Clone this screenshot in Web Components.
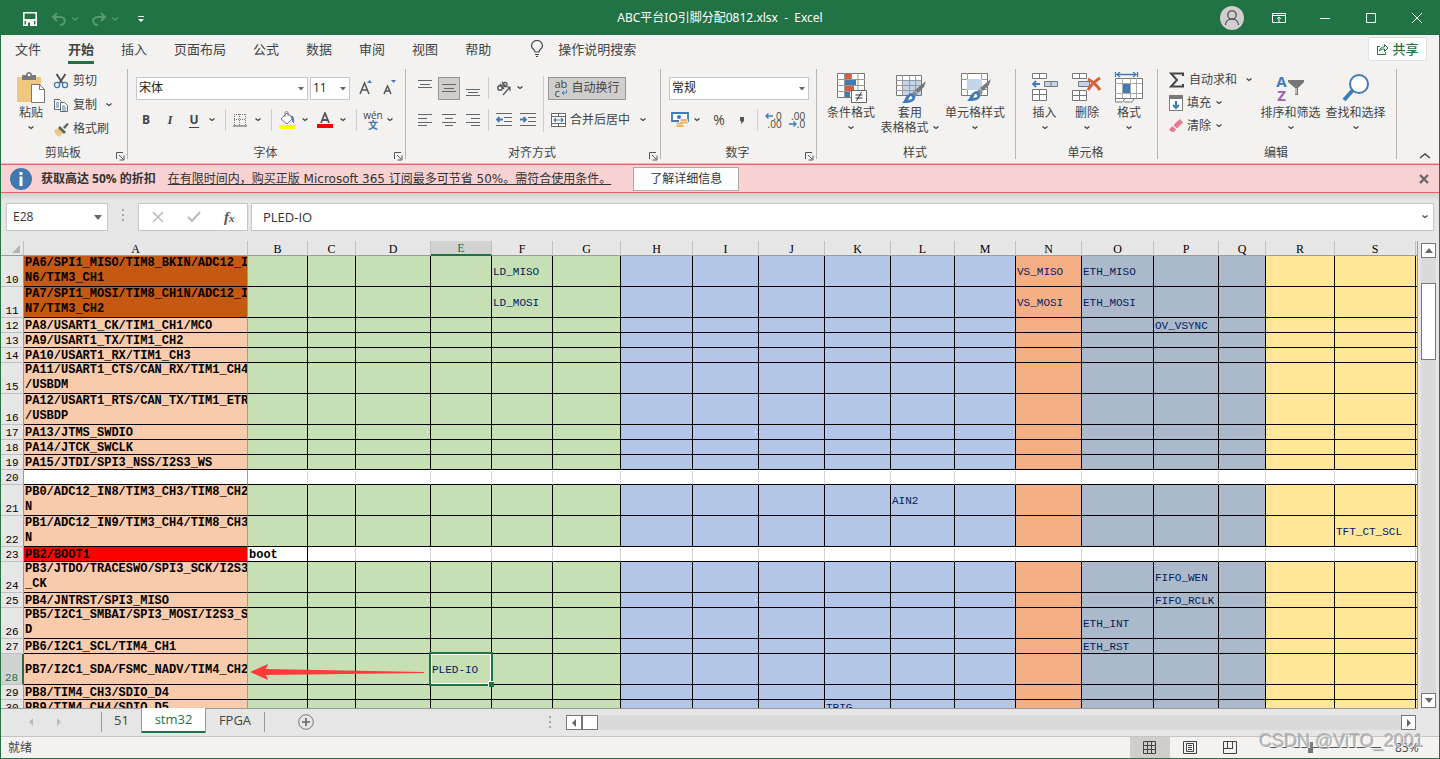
<!DOCTYPE html>
<html lang="zh-CN">
<head>
<meta charset="utf-8">
<title>ABC平台IO引脚分配0812.xlsx - Excel</title>
<style>
html,body{margin:0;height:100%}
body{font:12px/16px "Open Sans","Noto Sans CJK SC",sans-serif;color:#444;background:#217346}
</style>
</head>
<body>
<excel-window></excel-window>
<script>
const BASE = `*{box-sizing:border-box}
button{font:inherit;color:inherit;background:none;border:0;padding:0;margin:0;display:flex;align-items:center;justify-content:center;white-space:nowrap}
svg{display:block}`;

function define(name, css, html, after) {
  const t = document.createElement('template');
  t.innerHTML = `<style>${BASE}${css}</style>${html}`;
  customElements.define(name, class extends HTMLElement {
    connectedCallback() {
      if (this.shadowRoot) return;
      this.attachShadow({mode: 'open'}).appendChild(t.content.cloneNode(true));
      if (after) after(this, this.shadowRoot);
    }
  });
}

const G = '#666', B = '#3f7bb9';
const brush = `<path d="M32 5 30 11 24 17 21 14z" fill="#777"/><path d="m20 15 4 3-4 4-3-4z" fill="#8a8a8a"/><path d="M17 17c3 1 5 3 4 6-2 4-7 4-13 4 3-2 3-8 9-10z" fill="${B}"/><path d="M16 20c2 0 3 2 2 3l-4 1z" fill="#fff"/>`;
const lines = (ys, xs) => ys.map((y, i) => `<path d="M${xs[i % xs.length][0]} ${y}.5h${xs[i % xs.length][1]}"/>`).join('');
const stroke = (s, c = G) => `<g fill="none" stroke="${c}">${s}</g>`;
const ICONS = {
  save: [16, 16, `<path d="M1.800 1.800h12.400v12.400H1.800z" fill="none" stroke="#fff" stroke-width="1.600"/><path d="M2 8h12v2H2zM4 10h8v5H4z" fill="#fff"/><path d="M6 11.500h2V15H6z" fill="#217346"/>`],
  undo: [16, 16, `<path d="M6 2 2 6l4 4M2 6h7c7 0 6 8 0 8" fill="none" stroke="#559a74" stroke-width="2"/>`],
  redo: [16, 16, `<path d="m10 2 4 4-4 4M14 6H7c-7 0-6 8 0 8" fill="none" stroke="#559a74" stroke-width="2"/>`],
  qat: [8, 8, `<path d="M1 1h6v1H1zM1 4h6L4 7z" fill="#fff"/>`],
  user: [24, 24, `<circle cx="12" cy="12" r="12" fill="#d0cece"/><circle cx="12" cy="9" r="4.200" fill="none" stroke="#555" stroke-width="1.300"/><path d="M5.500 19c0-8 13-8 13 0" fill="none" stroke="#555" stroke-width="1.300"/>`],
  ribbonopt: [14, 12, `<path d="M.5 1.500h13v9H.5zM1 3.500h12M7 10V5M5 7l2-2 2 2" fill="none" stroke="#fff"/>`],
  min: [10, 10, `<path d="M0 5.500h10" stroke="#fff"/>`],
  max: [10, 10, `<path d="M.5.5h9v9h-9z" stroke="#fff" fill="none"/>`],
  close: [12, 12, `<path d="m1 1 10 10M11 1 1 11" stroke="#fff"/>`],
  bulb: [14, 18, `<path d="M5 12c0-3-3.500-3-3.500-6a5.500 5.500 0 0 1 11 0C12.500 9 9 9 9 12zM5 14.500h4M6 16.500h2" fill="none" stroke="#444" stroke-width="1.200"/>`],
  share: [13, 13, `<path d="M4 3.500H1.500v8h8V9" fill="none" stroke="#217346"/><path d="M3.500 8c.5-3 2-4 5-4V1.500L12 5 8.500 8.500V6c-2 0-4 0-5 2z" fill="none" stroke="#217346"/>`],
  chev: [8, 6, `<path d="m1.500 1.500 2.500 2 2.500-2" fill="none" stroke="#444" stroke-width="1.300"/>`],
  chevlite: [8, 6, `<path d="m1 1.500 3 2.500 3-2.500" fill="none" stroke="#559a74" stroke-width="1.300"/>`],
  tri: [6, 4, `<path d="M0 0h6L3 3.500z" fill="#666"/>`],
  tri8: [8, 5, `<path d="M0 0h8L4 5z" fill="#666"/>`],
  launch: [9, 9, `<path d="M.5 7V.5H7M3 3l4 4M8 3.500V8H3.500" fill="none" stroke="#555"/>`],
  up: [12, 8, `<path d="m1 6 5-4 5 4" fill="none" stroke="#444" stroke-width="1.400"/>`],
  paste: [30, 32, `<path d="M1 5h24v25H1z" fill="#edc87e"/><path d="M6 3h4c0-4 6-4 6 0h4v5H6z" fill="#7a7a7a"/><circle cx="13" cy="3" r="1.300" fill="#fff"/><path d="M15.500 12.500h8l5 5v13h-13z" fill="#fff" stroke="#777"/><path d="M23.500 12.500v5h5" fill="none" stroke="#777"/>`],
  cut: [16, 16, `<path d="m3.500 1 6 9M12.500 1l-6 9" stroke="#555" stroke-width="2" fill="none"/><circle cx="4" cy="12" r="2.600" fill="none" stroke="${B}" stroke-width="1.300"/><circle cx="12" cy="12" r="2.600" fill="none" stroke="${B}" stroke-width="1.300"/>`],
  copy: [16, 16, `<path d="M1.500 2.500h5l2 2v8h-7z" fill="#fff" stroke="#666"/><path d="M7.500 5.500h4l3 3v6h-7z" fill="#fff" stroke="#666"/><path d="M3 6h3M3 8h3M3 10h3M9 9h3M9 11h4M9 13h4" stroke="${B}"/>`],
  brush: [16, 16, `<path d="m1 9 6-2 4 4-5 5C3 14 2 12 1 9z" fill="#edc87e"/><path d="m7 5 6 6-2 2-6-6z" fill="#666"/><path d="m10 6 4-4 2 1-4 5z" fill="#666"/>`],
  sigma: [16, 16, `<path d="M14 4V1.500H2L8 8l-6 6.500h12V12" fill="none" stroke="#444" stroke-width="2"/>`],
  fill: [14, 16, `<path d="M.5 2.500h13v13H.5z" fill="#fff" stroke="#777"/><path d="M0 0h14v4H0z" fill="#777"/><path d="M7 6v7M4 10l3 3 3-3" fill="none" stroke="${B}" stroke-width="2"/>`],
  eraser: [14, 16, `<path d="M8 3.500 11 1l3 3.500-6 6L4.500 7z" fill="#e8788f"/><path d="m3.500 8 3.500 3.500L5 14l-3-.5-2-2z" fill="#e8788f"/>`],
  borders: [14, 14, `<path d="M1 1.500h12M1 6.500h12M1.500 1v12M6.500 1v12M12.500 1v12" stroke="#777" stroke-dasharray="1 1"/><path d="M0 13h14" stroke="#555"/>`],
  bucket: [18, 18, `<path d="m3 8 6-6 6 5-6 6z" fill="#fff" stroke="#777"/><path d="M7 6V2c0-2 3-2 3 0v3" fill="none" stroke="#777"/><path d="M12 5c4-1 4 2 4 7-3-1-1-4-4-7z" fill="${B}"/><path d="M1 14h16v4H1z" fill="#ff0"/>`],
  fontcolor: [16, 16, `<path d="m4 11 4-10 4 10M5.500 8h5" fill="none" stroke="#555" stroke-width="1.800"/><path d="M0 12h16v4H0z" fill="#f00"/>`],
  grow: [14, 18, `<path d="m1 15 4.500-11L10 15M3 11h5" fill="none" stroke="#555" stroke-width="1.500"/><path d="M8 4h5l-2.500-3z" fill="${B}"/>`],
  shrink: [14, 18, `<path d="m1 15 3.500-8L8 15M2.500 12h4" fill="none" stroke="#555" stroke-width="1.500"/><path d="M8 1h5l-2.500 3z" fill="${B}"/>`],
  vtop: [14, 16, stroke(lines([0, 4, 7], [[0, 14], [2, 10], [0, 14]]))],
  vmid: [14, 16, stroke(lines([4, 8, 11], [[0, 14], [2, 10], [0, 14]]))],
  vbot: [14, 16, stroke(lines([9, 12, 15], [[0, 14], [2, 10], [0, 14]]))],
  left: [14, 12, stroke(lines([0, 4, 8, 11], [[0, 14], [0, 9]]))],
  center: [14, 12, stroke(lines([0, 4, 8, 11], [[0, 14], [3, 8]]))],
  right: [14, 12, stroke(lines([0, 4, 8, 11], [[0, 14], [5, 9]]))],
  outdent: [16, 14, stroke(`<path d="M0 .5h16M8 4.500h8M8 8.500h8M0 12.500h16"/>`) + `<path d="M7 6.500H1M3.500 4 1 6.500 3.500 9" fill="none" stroke="${B}" stroke-width="1.800"/>`],
  indent: [16, 14, stroke(`<path d="M0 .5h16M8 4.500h8M8 8.500h8M0 12.500h16"/>`) + `<path d="M0 6.500h6M3.500 4 6 6.500 3.500 9" fill="none" stroke="${B}" stroke-width="1.800"/>`],
  wrap: [12, 16, `<path d="M10.500 10v3H6M8 11l-2 2 2 2" fill="none" stroke="${B}"/>`],
  orient: [16, 16, `<circle cx="4" cy="8" r="2.200" fill="none" stroke="#555" stroke-width="1.400"/><path d="m4 4 4 5M6 2l4 5" stroke="#555" stroke-width="1.400"/><circle cx="9" cy="4.500" r="2" fill="none" stroke="#555" stroke-width="1.300"/><path d="M7 15 14 7M10.500 7H14v4" fill="none" stroke="#555" stroke-width="1.200"/>`],
  merge: [16, 16, `<path d="M.5 1.500h14v13H.5z" fill="#fff" stroke="#666"/><path d="M0 4.500h15M0 11.500h15M7.500 1v3M7.500 12v3" stroke="#666"/><path d="M3 8h9M5 6 3 8l2 2M10 6l2 2-2 2" fill="none" stroke="${B}" stroke-width="1.200"/>`],
  money: [18, 18, `<path d="M1 2h16v8H1z" fill="#fff" stroke="${B}" stroke-width="1.800"/><circle cx="8" cy="6" r="2" fill="${B}"/><path d="M8 8h9v9H5v-5h3z" fill="#f3f2f1"/><path d="M9.500 9h7M9.500 11.500h7M5.500 12.500h6M5.500 15h7" stroke="#e8b869" stroke-width="1.800"/>`],
  comma: [6, 8, `<path d="M1 1h4v4L2 8V5H1z" fill="#555"/>`],
  decl: [8, 8, `<path d="M8 4H1M3.500 1.500 1 4l2.500 2.500" fill="none" stroke="${B}" stroke-width="1.400"/>`],
  decr: [8, 8, `<path d="M0 4h7M4.500 1.500 7 4 4.500 6.500" fill="none" stroke="${B}" stroke-width="1.400"/>`],
  cond: [32, 32, `<path d="M2.500 1.500h27v24h-27z" fill="#fff" stroke="#777"/><path d="M9.500 1v24M16.500 1v24M23 1v24M2 7.500h28M2 13.500h28M2 19.500h28" stroke="#999"/><path d="M10 2h6v5h-6zM10 14h9v5h-9z" fill="#db5b3b"/><path d="M10 8h11v5H10zM10 20h5v5h-5z" fill="${B}"/><path d="M16.500 18.500h15v12h-15z" fill="#fff" stroke="#666"/><path d="M20.500 23h7M20.500 26h7M26.500 20l-5 9" stroke="#333"/>`],
  table: [34, 32, `<path d="M3.500 3.500h25v20h-25z" fill="#fff" stroke="#777"/><path d="M10 8h18v15H10z" fill="#c2d5ea"/><path d="M9.500 3v20M16.500 3v20M22.500 3v20M3 8.500h25M3 13.500h25M3 18.500h25" stroke="#999"/><g transform="translate(1 4)">${brush}</g>`],
  cellstyle: [34, 32, `<path d="M3.500 1.500h26v22h-26z" fill="#fff" stroke="#777"/><path d="M9.500 1v22M23.500 1v22M3 7.500h26M3 17.500h26" stroke="#999"/><path d="M9 7h15v11H9z" fill="#c2d5ea"/><g transform="translate(1 2)">${brush}</g>`],
  insert: [28, 32, `<path d="M1.500 1.500h14v5h-14zM8.500 1v6M1.500 17.500h14v11h-14zM8.500 17v11M1 22.500h14" fill="#fff" stroke="#777"/><path d="M13.500 9.500h13v5h-13zM20 9v6" fill="#c2d5ea" stroke="#777"/><path d="M9 12H2M5 9l-3 3 3 3" fill="none" stroke="${B}" stroke-width="1.800"/>`],
  del: [30, 32, `<path d="M.5 1.500h14v5H.5zM7.500 1v6M.5 18.500h14v10H.5zM7.500 18v10M0 23.500h14" fill="#fff" stroke="#777"/><path d="M6.500 9.500h11v5h-11z" fill="#c2d5ea" stroke="#777"/><path d="M16 7c5 3 9 6 12 11M28 6c-5 3-9 7-12 12" fill="none" stroke="#db5b3b" stroke-width="2.800"/>`],
  format: [30, 32, `<path d="M1.500 0v5M23.500 0v5M3 2.500h19M6 0 3 2.500 6 5M19 0l3 2.500L19 5" fill="none" stroke="${B}" stroke-width="1.300"/><path d="M1.500 6.500h27v20h-27z" fill="#fff" stroke="#777"/><path d="M8.500 6v20M16.500 6v20M22.500 6v20M1 11.500h27M1 21.500h27" stroke="#aaa"/><path d="M9 12h7v9H9z" fill="${B}"/><path d="M1.500 27v3h7l2-3M10 30h8l2-3" fill="#fff" stroke="#777"/>`],
  funnel: [18, 18, `<path d="M1 1h16v2l-6 6v7H8V9L1 3z" fill="#777"/><path d="M9 9v6" stroke="#fff"/>`],
  find: [30, 32, `<circle cx="18" cy="12" r="9" fill="#fff" stroke="${B}" stroke-width="2"/><path d="m12 18-9 10" stroke="${B}" stroke-width="4"/>`],
  info: [22, 22, `<circle cx="11" cy="11" r="11" fill="#4377b0"/><path d="M9.500 4h3v3h-3zM9.500 8.500h3V18h-3z" fill="#fff"/>`],
  xbold: [10, 10, `<path d="m1 1 8 8M9 1 1 9" stroke="#666" stroke-width="2.400"/>`],
  xlite: [12, 12, `<path d="m1 1 10 10M11 1 1 11" stroke="#bdbdbd" stroke-width="1.600"/>`],
  check: [14, 12, `<path d="m1 6 4 4 8-9" fill="none" stroke="#bdbdbd" stroke-width="2.200"/>`],
  dots: [4, 14, `<path d="M1 1h2v2H1zM1 6h2v2H1zM1 11h2v2H1z" fill="#aaa"/>`],
  navl: [6, 8, `<path d="M5 0v8L1 4z" fill="#bbb"/>`],
  navr: [6, 8, `<path d="M1 0v8l4-4z" fill="#bbb"/>`],
  al: [6, 8, `<path d="M5 0v8L1 4z" fill="#666"/>`],
  ar: [6, 8, `<path d="M1 0v8l4-4z" fill="#666"/>`],
  au: [8, 5, `<path d="M0 5h8L4 0z" fill="#666"/>`],
  plus: [16, 16, `<circle cx="8" cy="8" r="7.300" fill="none" stroke="#777"/><path d="M8 4v8M4 8h8" stroke="#666" stroke-width="1.600"/>`],
  vnormal: [14, 14, stroke(`<path d="M.5.5h12v12H.5zM4.500 0v13M8.500 0v13M0 4.500h13M0 8.500h13"/>`, '#444')],
  vpage: [14, 14, stroke(`<path d="M.5.5h13v12H.5zM3.500 2.500h7v8h-7zM5 4.500h4M5 6.500h4M5 8.500h4"/>`, '#444')],
  vbreak: [14, 14, stroke(`<path d="M.5.5h13v12H.5zM4.500 0v7M9.500 0v7M0 7.500h10"/>`, '#444')],
};
customElements.define('x-icon', class extends HTMLElement {
  connectedCallback() {
    if (this.shadowRoot) return;
    const [w, h, body] = ICONS[this.getAttribute('name')];
    this.attachShadow({mode: 'open'}).innerHTML =
      `<style>:host{display:inline-block;flex:none}svg{display:block}</style><svg width="${w}" height="${h}" viewBox="0 0 ${w} ${h}" aria-hidden="true">${body}</svg>`;
  }
});
const ic = n => `<x-icon name="${n}"></x-icon>`;
const ib = (n, label, cls = '') => `<button class="${cls}" aria-label="${label}">${ic(n)}</button>`;

/* Title bar */
define('title-bar', `:host{display:grid;grid-template-columns:1fr auto 1fr;align-items:center;height:35px;background:#217346;color:#fff}
.l{display:flex;align-items:center;padding:2px 0 0 22px}.l button{height:20px;margin-right:4px}.l .c{margin-right:12px}
.l button:first-child{margin-right:13px}.l .q{margin:0 0 0 6px}
.r{display:flex;justify-content:flex-end;align-items:center}.r button{width:46px;height:34px}.r .u{width:48px}
h1{font:400 12px/16px "Noto Sans","Noto Sans CJK SC",sans-serif;margin:0;white-space:pre}`,
`<div class="l">${ib('save', '保存')}${ib('undo', '撤消')}${ib('chevlite', '撤消列表', 'c')}${ib('redo', '恢复')}${ib('chevlite', '恢复列表', 'c')}${ib('qat', '自定义快速访问工具栏', 'q')}</div>
<h1>ABC平台IO引脚分配0812.xlsx  -  Excel</h1>
<div class="r">${ib('user', '账户', 'u')}${ib('ribbonopt', '功能区显示选项')}${ib('min', '最小化')}${ib('max', '最大化')}${ib('close', '关闭')}</div>`);

/* Tabs */
define('ribbon-tabs', `:host{display:flex;align-items:center;height:31px;padding:0 12px 3px 14px;font-size:13px;line-height:18px;color:#444}
nav{display:flex;gap:27px}nav a{color:inherit;text-decoration:none;padding:5px 0 3px;border-bottom:3px solid transparent}
.on{font-weight:700;border-color:#217346}.tell{margin-left:39px;gap:14px}.sp{flex:1}
.share{height:24px;width:59px;background:#fff;border:1px solid #e1dfdd;border-radius:2px;color:#217346;font-weight:500;gap:3px}`,
`<nav>${['文件', '开始', '插入', '页面布局', '公式', '数据', '审阅', '视图', '帮助'].map((t, i) => `<a href="#"${i == 1 ? ' class="on"' : ''}>${t}</a>`).join('')}</nav>
<button class="tell">${ic('bulb')}操作说明搜索</button><span class="sp"></span><button class="share">${ic('share')}共享</button>`);

/* Ribbon pieces */
define('ribbon-group', `:host{display:grid;grid-template-rows:77px 16px;padding:2px 0 0;height:97px;position:relative}
:host::after{content:"";position:absolute;right:0;top:3px;height:90px;width:1px;background:#b8b6b4}
.f{display:grid;grid-template-columns:1fr auto 1fr;align-items:center;padding-right:3px}
.f button{justify-self:end;align-self:end}`,
`<slot></slot><div class="f"><span></span><span class="n"></span><button hidden>${ic('launch')}</button></div>`,
(h, r) => {
  r.querySelector('.n').textContent = h.getAttribute('label');
  const b = r.querySelector('button');
  if (h.hasAttribute('launcher')) { b.hidden = false; b.setAttribute('aria-label', h.getAttribute('label') + '设置'); }
  else b.style.display = 'none';
});
define('big-button', `:host{display:block}button{width:100%;flex-direction:column;justify-content:flex-start}
.i{height:34px;display:flex;align-items:center;justify-content:center}.t{display:flex;align-items:center;gap:3px;height:16px}
.d{height:14px;display:flex;align-items:center}`,
`<button><span class="i"><slot></slot></span><span class="t a"></span><span class="d"></span></button>`,
(h, r) => {
  r.querySelector('.a').textContent = h.getAttribute('label');
  r.querySelector('.d').innerHTML = h.hasAttribute('second') ? `<span class="t">${h.getAttribute('second')}${ic('chev')}</span>` : ic('chev');
});
define('small-button', `:host{display:block}button{gap:4px;height:100%}span.c{display:flex}:host([wide]) .c{margin-left:4px}`,
`<button><slot></slot><span class="t"></span></button>`,
(h, r) => {
  r.querySelector('.t').textContent = h.getAttribute('label');
  if (h.hasAttribute('menu')) r.querySelector('button').insertAdjacentHTML('beforeend', `<span class="c">${ic('chev')}</span>`);
});
define('combo-box', `:host{display:block;height:23px;position:relative}
select{appearance:none;width:100%;height:100%;border:1px solid #c6c6c6;background:#fff;border-radius:0;padding:0 2px;margin:0;font:inherit;color:#222;display:block}
x-icon{position:absolute;right:4px;top:10px;pointer-events:none}`,
`<select></select>${ic('tri')}`,
(h, r) => { const s = r.querySelector('select'); s.setAttribute('aria-label', h.getAttribute('label')); s.add(new Option(h.getAttribute('value'))); });

define('excel-ribbon', `:host{display:flex;height:98px;border-bottom:1px solid #c8c6c4;color:#444}
ribbon-group{flex:none}.row{display:grid;align-items:center;justify-items:center;height:32px}
.two{padding-top:4px}.three{display:grid;grid-auto-rows:24px;align-items:center;justify-items:start;align-content:start}
.sep{width:1px;height:22px;background:#d0cecc}.tall{width:1px;height:56px;background:#d0cecc;grid-row:1/3;grid-column:7;align-self:center;justify-self:center}
.clip{display:grid;grid-template-columns:44px 1fr;padding:1px 0 0 8px}
.font{padding-left:6px}.font .c{padding-left:2px;grid-template-columns:172px 42px 4px 24px 24px}
.font .c combo-box{width:100%}.font .c .size{width:40px;justify-self:end}
.font .f{grid-template-columns:24px 24px 24px 12px 14px 16px 20px 6px 26px 10px 30px 6px 20px 14px 20px}
.b{font:700 12px/16px "Open Sans",sans-serif;color:#444}.i{font:italic 700 13px/16px "Liberation Serif",serif}.u{font:700 12px/14px "Open Sans",sans-serif;border-bottom:1px solid #444;height:15px}
.wen{flex-direction:column;font-size:10px;line-height:9px}.wen b{color:#3f7bb9;font-size:10px;line-height:10px;font-weight:700}
.align{display:grid;grid-template-columns:24px 24px 24px 6px 26px 22px 8px 1fr;grid-template-rows:32px 32px 8px;align-items:center;justify-items:center;padding:4px 0 0 7px}
.on{background:#d0cecd;border:1px solid #979593;width:22px;height:23px}
.wrapb{justify-self:start;background:#d0cecd;border:1px solid #979593;height:23px;width:78px;gap:4px;margin-left:1px}
.ab{display:inline-grid;grid-template-columns:13px;font:11px/9px "Open Sans",sans-serif;position:relative;height:18px;text-align:left}.ab x-icon{position:absolute;left:2px;top:1px}
.mb{justify-self:start;gap:3px;margin-left:4px}.mb span+x-icon{margin-left:6px}
.or{grid-column:5/7;gap:4px;justify-self:start;margin-left:5px}
.num{padding-left:8px}.num combo-box{width:140px;justify-self:start}
.num .f{grid-template-columns:22px 12px 32px 14px 16px 17px 30px}
.pc{font-size:14px}.dec{display:grid;grid-template-columns:auto auto;font:10px/8px "Open Sans",sans-serif;align-items:center}
.dec .w{grid-column:1/3;text-align:right}
.bigs{display:grid;padding-top:3px;align-items:start;justify-content:start}
.st{grid-template-columns:58px 60px 70px;padding-left:5px}.ce{grid-template-columns:43px 42px 42px;padding-left:7px}
.ed{display:grid;grid-template-columns:89px 65px 65px;padding-left:11px}.ed .three{grid-auto-rows:23px}.ed big-button{padding-top:3px}
.clip big-button{padding-top:2px}
.az{display:flex;align-items:center}.az span{display:grid;font:700 15px/14px "Open Sans",sans-serif;color:#3f7bb9}.az i{font-style:normal;color:#9a62b8}
.col{margin-left:auto;align-self:end;padding:0 8px 3px 0}`,
`<ribbon-group label="剪贴板" launcher style="width:127px"><div class="clip"><big-button label="粘贴">${ic('paste')}</big-button>
<div class="three"><small-button label="剪切">${ic('cut')}</small-button><small-button label="复制" menu wide>${ic('copy')}</small-button><small-button label="格式刷">${ic('brush')}</small-button></div></div></ribbon-group>
<ribbon-group label="字体" launcher style="width:278px"><div class="two font"><div class="row c"><combo-box label="字体" value="宋体"></combo-box><combo-box class="size" label="字号" value="11"></combo-box><span></span>${ib('grow', '增大字号')}${ib('shrink', '减小字号')}</div>
<div class="row f"><button class="b">B</button><button class="i">I</button><button class="u">U</button>${ic('chev')}<span class="sep"></span>${ib('borders', '边框')}${ic('chev')}<span class="sep"></span>${ib('bucket', '填充颜色')}${ic('chev')}${ib('fontcolor', '字体颜色')}${ic('chev')}<span class="sep"></span><button class="wen"><span>wén</span><b>文</b></button>${ic('chev')}</div></div></ribbon-group>
<ribbon-group label="对齐方式" launcher style="width:255px"><div class="align">${ib('vtop', '顶端对齐')}${ib('vmid', '垂直居中', 'on')}${ib('vbot', '底端对齐')}<span class="sep"></span><button class="or" aria-label="方向">${ic('orient')}${ic('chev')}</button><span class="tall"></span><button class="wrapb"><span class="ab"><span>ab</span><span>c</span>${ic('wrap')}</span>自动换行</button>
${ib('left', '左对齐')}${ib('center', '居中')}${ib('right', '右对齐')}<span class="sep"></span>${ib('outdent', '减少缩进量')}${ib('indent', '增加缩进量')}<button class="mb">${ic('merge')}<span>合并后居中</span>${ic('chev')}</button></div></ribbon-group>
<ribbon-group label="数字" launcher style="width:156px"><div class="two num"><div class="row"><combo-box label="数字格式" value="常规"></combo-box></div>
<div class="row f">${ib('money', '会计数字格式')}${ic('chev')}<button class="pc">%</button>${ib('comma', '千位分隔样式')}<span class="sep"></span><button class="dec" aria-label="增加小数位数">${ic('decl')}<span>.0</span><span class="w">.00</span></button><button class="dec" aria-label="减少小数位数"><span class="w">.00</span>${ic('decr')}<span>.0</span></button></div></div></ribbon-group>
<ribbon-group label="样式" style="width:199px"><div class="bigs st"><big-button label="条件格式">${ic('cond')}</big-button><big-button label="套用" second="表格格式">${ic('table')}</big-button><big-button label="单元格样式">${ic('cellstyle')}</big-button></div></ribbon-group>
<ribbon-group label="单元格" style="width:142px"><div class="bigs ce"><big-button label="插入">${ic('insert')}</big-button><big-button label="删除">${ic('del')}</big-button><big-button label="格式">${ic('format')}</big-button></div></ribbon-group>
<ribbon-group label="编辑" style="width:239px"><div class="ed"><div class="three"><small-button label="自动求和" menu wide>${ic('sigma')}</small-button><small-button label="填充" menu>${ic('fill')}</small-button><small-button label="清除" menu>${ic('eraser')}</small-button></div>
<big-button label="排序和筛选"><span class="az"><span>A<i>Z</i></span>${ic('funnel')}</span></big-button><big-button label="查找和选择">${ic('find')}</big-button></div></ribbon-group>
<div class="col">${ib('up', '折叠功能区')}</div>`);

/* Message bar */
define('message-bar', `:host{display:flex;align-items:center;height:29px;background:#f8d2d2;border:solid #e06666;border-width:1px 0;padding:0 10px 0 9px;color:#333}
strong{margin:0 12px 0 9px;white-space:nowrap}a{color:inherit;white-space:nowrap;font-family:"DejaVu Sans","Noto Sans CJK SC",sans-serif}.more{margin-left:22px;width:106px;height:24px;background:#fdfdfd;border:1px solid #ababab}
.x{margin-left:auto}`,
`${ic('info')}<strong>获取高达 50% 的折扣</strong><a href="#">在有限时间内，购买正版 Microsoft 365 订阅最多可节省 50%。需符合使用条件。</a><button class="more">了解详细信息</button>${ib('xbold', '关闭消息', 'x')}`);

/* Formula bar */
define('formula-bar', `:host{display:flex;align-items:center;height:48px;padding:0 5px 0 5px;background:linear-gradient(#cfcfcf,#e6e6e6 7px)}
.box{display:flex;align-items:center;height:28px;background:#fff;border:1px solid #c6c6c6;position:relative}
input{font:inherit;line-height:18px;color:#333;border:0;background:none;outline:0;padding:0;width:100%}
.name{width:102px;padding:0 5px 0 6px}.d{margin:0 13px}.fx{width:110px;justify-content:space-around;padding:0 1px}
.fx i{font:italic 700 15px/20px "Liberation Serif",serif;color:#555}.fx small{font-size:11px}
.in{flex:1;margin-left:3px;padding:0 4px 0 11px;font-size:13px}`,
`<div class="box name"><input aria-label="名称框" value="E28">${ic('tri8')}</div><span class="d">${ic('dots')}</span>
<div class="box fx">${ib('xlite', '取消')}${ib('check', '输入')}<button aria-label="插入函数"><i>f<small>x</small></i></button></div>
<div class="box in"><input aria-label="编辑栏" value="PLED-IO">${ic('chev')}</div>`);

/* Sheet */
const COLS = [['A', 224], ['B', 60, 'g'], ['C', 48, 'g'], ['D', 75, 'g'], ['E', 61, 'g'], ['F', 61, 'g'], ['G', 68, 'g'], ['H', 72, 'b'], ['I', 66, 'b'], ['J', 66, 'b'], ['K', 66, 'b'], ['L', 64, 'b'], ['M', 61, 'b'], ['N', 66, 'o'], ['O', 72, 's'], ['P', 65, 's'], ['Q', 47, 's'], ['R', 69, 'y'], ['S', 81, 'y'], ['', 0, 'y']];
const ROWS = [
  [10, 31, 'PA6/SPI1_MISO/TIM8_BKIN/ADC12_I<br>N6/TIM3_CH1', {F: 'LD_MISO', N: 'VS_MISO', O: 'ETH_MISO'}, 'dark'],
  [11, 31, 'PA7/SPI1_MOSI/TIM8_CH1N/ADC12_I<br>N7/TIM3_CH2', {F: 'LD_MOSI', N: 'VS_MOSI', O: 'ETH_MOSI'}, 'dark'],
  [12, 15, 'PA8/USART1_CK/TIM1_CH1/MCO', {P: 'OV_VSYNC'}],
  [13, 15, 'PA9/USART1_TX/TIM1_CH2'],
  [14, 15, 'PA10/USART1_RX/TIM1_CH3'],
  [15, 31, 'PA11/USART1_CTS/CAN_RX/TIM1_CH4<br>/USBDM'],
  [16, 31, 'PA12/USART1_RTS/CAN_TX/TIM1_ETR<br>/USBDP'],
  [17, 15, 'PA13/JTMS_SWDIO'],
  [18, 15, 'PA14/JTCK_SWCLK'],
  [19, 15, 'PA15/JTDI/SPI3_NSS/I2S3_WS'],
  [20, 15, '', {}, 'blank'],
  [21, 31, 'PB0/ADC12_IN8/TIM3_CH3/TIM8_CH2<br>N', {L: 'AIN2'}],
  [22, 31, 'PB1/ADC12_IN9/TIM3_CH4/TIM8_CH3<br>N', {S: 'TFT_CT_SCL'}],
  [23, 15, 'PB2/BOOT1', {B: '<b>boot</b>'}, 'blank boot'],
  [24, 31, 'PB3/JTDO/TRACESWO/SPI3_SCK/I2S3<br>_CK', {P: 'FIFO_WEN'}],
  [25, 15, 'PB4/JNTRST/SPI3_MISO', {P: 'FIFO_RCLK'}],
  [26, 31, 'PB5/I2C1_SMBAI/SPI3_MOSI/I2S3_S<br>D', {O: 'ETH_INT'}],
  [27, 15, 'PB6/I2C1_SCL/TIM4_CH1', {O: 'ETH_RST'}],
  [28, 31, 'PB7/I2C1_SDA/FSMC_NADV/TIM4_CH2', {E: 'PLED-IO'}, 'cur'],
  [29, 15, 'PB8/TIM4_CH3/SDIO_D4'],
  [30, 15, 'PB9/TIM4_CH4/SDIO_D5', {K: 'TRIG'}],
];
define('sheet-grid', `:host{display:block;overflow:hidden;min-width:0;border-right:1px solid #9b9b9b;border-bottom:1px solid #9b9b9b;background:#fff}
table{table-layout:fixed;width:100%;border-collapse:separate;border-spacing:0;font-family:"Liberation Mono",monospace}
th,td{padding:0;border:solid #000;border-width:0 1px 1px 0;overflow:hidden;white-space:nowrap;text-align:left;vertical-align:middle;line-height:12px}
thead th{height:15px;background:#e6e6e6;border-color:#b8b8b8 #c0c0c0 #9b9b9b;text-align:center;font:400 12px/12px "Liberation Serif",serif;color:#000;padding-top:2px}
thead .e{background:#d2d2d2;border-bottom:2px solid #217346;color:#217346;line-height:11px}
tbody th{background:#e6e6e6;border-color:#c0c0c0 #9b9b9b;font-size:11px;font-weight:400;color:#000;text-align:center;vertical-align:bottom}
.cur th{background:#d2d2d2;border-right:2px solid #217346;color:#217346}
td{font-size:11px;color:#002060;padding:2px 0 0 1px}
td b{color:#000;font-size:12px}
.A{background:#f8cbad;font-weight:700;font-size:12px;color:#000;border-right-color:#9b9b9b}
.A.two{line-height:15px;padding-top:0}.dark .A{background:#c65911}
.g{background:#c6e0b4}.b{background:#b4c6e7}.o{background:#f4b084}.s{background:#acb9ca}.y{background:#ffe699}
.blank td{background:#fff;border-right-color:#d4d4d4}.blank .A{border-right-color:#9b9b9b}.boot .A{background:#f00}.boot .B{border-right-color:#000}
tr>:last-child{border-right:0}
.sel,.arr{position:relative;overflow:visible}
.ring{position:absolute;left:-2px;top:-2px;right:-2px;bottom:-2px;border:2px solid #217346;box-shadow:inset 0 0 0 1px #fff}
.ring::after{content:"";position:absolute;right:-3px;bottom:-3px;width:5px;height:5px;background:#217346;border:solid #fff;border-width:1px 0 0 1px;box-sizing:content-box}
.arr svg{position:absolute;left:2px;top:9px;z-index:2}
.corner svg{margin:0 3px 0 auto}`, `<table></table>`,
(h, r) => {
  const head = `<colgroup><col style="width:23px">${COLS.map(c => `<col${c[1] ? ` style="width:${c[1]}px"` : ''}>`).join('')}</colgroup>
<thead><tr><th class="corner" aria-label="全选"><svg width="8" height="8" aria-hidden="true"><path d="M8 0v8H0z" fill="#b4b4b4"/></svg></th>${COLS.map(c => `<th class="${c[0] == 'E' ? 'e' : ''}" scope="col">${c[0]}</th>`).join('')}</tr></thead>`;
  const body = ROWS.map(([n, ht, a, cells = {}, cls = '']) => `<tr class="${cls}" style="height:${ht}px"><th scope="row">${n}</th>` + COLS.map(([c, , k]) => {
    if (c == 'A') return `<td class="A${a.includes('<br>') ? ' two' : ''}"${!a ? ' style="background:#fff"' : ''}>${a}</td>`;
    let x = cells[c] || '', extra = '';
    if (n == 28 && c == 'E') { extra = ' sel'; x += '<span class="ring"></span>'; }
    if (n == 28 && c == 'B') { extra = ' arr'; x = '<svg width="176" height="18" aria-hidden="true"><path d="m0 9 18-8-2 5 158 3v1l-158 2 2 5z" fill="#ff3b3b"/></svg>'; }
    return `<td class="${k} ${c}${extra}">${x}</td>`;
  }).join('') + '</tr>').join('');
  r.querySelector('table').innerHTML = head + `<tbody>${body}</tbody>`;
});

define('v-scroll', `:host{display:flex;flex-direction:column;width:21px;padding:2px 3px 1px 3px;background:#e6e6e6}
button{height:15px;width:15px;background:#fff;border:1px solid #777}.t{flex:1;background:#dadada;width:15px;padding-top:25px}
.th{display:block;height:77px;background:#fff;border:1px solid #777}`,
`${ib('au', '向上滚动')}<div class="t"><span class="th"></span></div>${ib('tri8', '向下滚动')}`);

/* Sheet tabs */
define('sheet-tabs', `:host{display:flex;height:27px;background:#e6e6e6;font-size:13px;line-height:18px;color:#444;align-items:flex-start}
.nav{display:flex;padding:9px 0 0 27px;gap:22px;width:100px}.line{width:1px;height:20px;margin-top:3px;background:#999}
nav{display:flex}nav a{height:23px;line-height:23px;color:inherit;text-decoration:none;text-align:center}
.on{color:#217346;background:#fff;width:65px;border:solid #999;border-width:0 1px 0;box-shadow:inset 0 -2px #217346;height:25px;margin-top:-1px}
.a{width:39px}.c{width:58px}.plus{margin:5px 0 0 33px}.d{margin-left:auto;padding-top:6px}
.h{display:flex;flex:0 1 850px;margin:6px 23px 0 14px;background:#dadada;height:15px}.h button{width:16px;height:15px;border:1px solid #777;background:#fff}.h button:last-child{margin-left:auto;width:15px}
.th{width:16px;background:#fff;border:1px solid #777;}`,
`<div class="nav">${ib('navl', '上一个工作表')}${ib('navr', '下一个工作表')}</div><span class="line"></span>
<nav><a class="a" href="#">51</a><a class="on" href="#">stm32</a><a class="c" href="#">FPGA</a></nav><span class="line"></span>${ib('plus', '新建工作表', 'plus')}
<span class="d">${ic('dots')}</span><div class="h">${ib('al', '向左滚动')}<span class="th"></span>${ib('ar', '向右滚动')}</div>`);

/* Status bar */
define('status-bar', `:host{display:flex;align-items:center;height:22px;background:#f3f2f1;border-top:1px solid #c6c4c2;padding-left:7px;position:relative;color:#444}
.v{margin-left:auto;display:flex}.v button{width:40px;height:21px}.v .on{background:#d0cecd}
input{appearance:none;background:linear-gradient(#555,#555) 0 50%/100% 1px no-repeat;width:112px;height:12px;margin:0 14px 0 19px}
input::-webkit-slider-thumb{appearance:none;width:5px;height:11px;background:#777}
output{width:44px}.wm{position:absolute;right:15px;bottom:6px;font:18px/22px "Liberation Sans",sans-serif;color:#aaa;text-shadow:1px 1px 0 #fff,-1px -1px 0 #8888;opacity:.9;pointer-events:none}`,
`<span>就绪</span><div class="v">${ib('vnormal', '普通', 'on')}${ib('vpage', '页面布局')}${ib('vbreak', '分页预览')}</div><input type="range" aria-label="显示比例" min="10" max="190" value="76"><output>85%</output><span class="wm">CSDN @ViTO_2001</span>`);

define('excel-window', `:host{display:flex;flex-direction:column;height:100vh;overflow:hidden;background:#f3f2f1;border:solid #217346;border-width:0 1px 1px;box-sizing:border-box}
title-bar{margin:0 -1px}.work{flex:1;min-height:0;display:grid;grid-template-columns:1fr auto;background:#e6e6e6}
title-bar,ribbon-tabs,excel-ribbon,message-bar,formula-bar,sheet-tabs,status-bar{flex:none;box-sizing:border-box}`,
`<title-bar></title-bar><ribbon-tabs></ribbon-tabs><excel-ribbon></excel-ribbon><message-bar></message-bar><formula-bar></formula-bar>
<div class="work"><sheet-grid></sheet-grid><v-scroll></v-scroll></div><sheet-tabs></sheet-tabs><status-bar></status-bar>`);
</script>
</body>
</html>
